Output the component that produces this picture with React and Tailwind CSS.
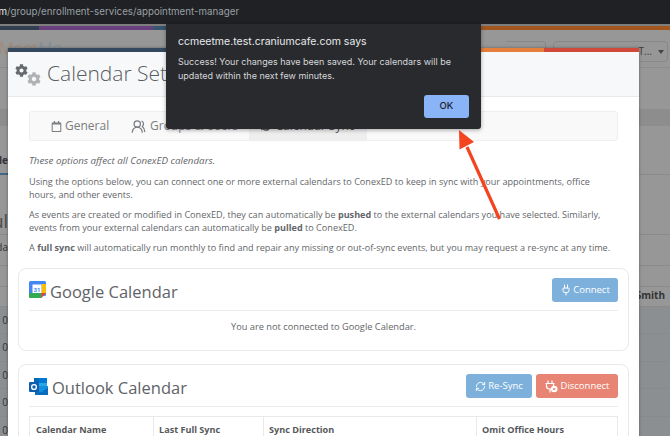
import { FaCog, FaRegCalendar, FaSyncAlt } from "react-icons/fa";
import { Plug, RefreshCw, UsersRound } from "lucide-react";

function GoogleLogo() {
  return (
    <svg width="17" height="17" viewBox="0 0 17 17" className="shrink-0 -mt-[5px]">
      <rect x="0" y="0" width="17" height="15" rx="1.5" fill="#4285f4" />
      <rect x="0" y="12" width="13" height="5" rx="1" fill="#34a853" />
      <rect x="12.5" y="3" width="4.5" height="9" fill="#fbbc04" />
      <path d="M12.5 12H17l-4.5 5z" fill="#ea4335" />
      <rect x="3.5" y="3.5" width="9" height="8.5" fill="#ffffff" />
      <text x="8" y="10.5" fontSize="6" fontFamily="Roboto, sans-serif" fontWeight="700" textAnchor="middle" fill="#4285f4">31</text>
    </svg>
  );
}

function OutlookLogo() {
  return (
    <svg width="19" height="17" viewBox="0 0 19 17" className="shrink-0 -mt-[3px]">
      <rect x="5" y="0" width="13" height="9" fill="#28a8ea" />
      <rect x="5" y="0" width="5" height="5" fill="#0364b8" />
      <rect x="10" y="0" width="8" height="5" fill="#0078d4" />
      <path d="M6 8h13v9H6z" fill="#1490df" />
      <path d="M6 11l6 3.5 7-5V17H6z" fill="#0a6cbd" />
      <rect x="0" y="4" width="10" height="10" rx="1" fill="#0f5fb0" />
      <circle cx="5" cy="9" r="2.4" fill="none" stroke="#ffffff" strokeWidth="1.4" />
    </svg>
  );
}

function PlugOff() {
  return (
    <svg width="14" height="13" viewBox="0 0 14 13" fill="none" stroke="#ffffff" strokeWidth="1.2">
      <path d="M4 0.5v3M8 0.5v3M1.5 3.5h9M2.5 3.5v2.5a3 3 0 0 0 3 3h1a3 3 0 0 0 3-3V3.5M6 9v3.5" />
      <circle cx="10.2" cy="9" r="3.3" fill="#ffffff" stroke="none" />
      <path d="M9 7.8l2.4 2.4M11.4 7.8L9 10.2" stroke="#e88473" strokeWidth="1" />
    </svg>
  );
}

function Panel({ className, children }) {
  return <div className={"mx-[10px] border border-[#e9e9e9] rounded-lg px-[10px] pt-[9px] " + className}>{children}</div>;
}

function StripRow({ className, left, right }) {
  return (
    <div className={"flex justify-between border-b border-[#8a8a8a] pr-[5px] text-[#333333] whitespace-nowrap " + className}>
      <span className="w-[8px] flex justify-end overflow-hidden">{left}</span>
      <span>{right}</span>
    </div>
  );
}

export default function App() {
  return (
    <div className="w-[670px] h-[436px] overflow-hidden relative flex flex-col bg-[#979797] font-['Open_Sans',sans-serif]">
      <div className="h-[24px] shrink-0 bg-[#202124] flex items-center text-[9.75px] text-[#9aa0a6] font-['Inter',sans-serif]">
        <span className="text-[#e8eaed] w-[7px] overflow-hidden flex justify-end">m</span>
        <span>/group/enrollment-services/appointment-manager</span>
      </div>

      {/* page behind the modal */}
      <div className="flex-1 flex flex-col">
        <div className="h-[2px] bg-[#7e7e7e]" />
        <div className="h-[4px] flex">
          <div className="w-[39px] bg-[#2f3f4d]" />
          <div className="w-[114px] bg-[#6a3f7d]" />
          <div className="w-[40px] bg-[#36566f]" />
          <div className="flex-1 bg-[#a2571f]" />
        </div>
        <div className="h-[38px] border-b border-[#8c8c8c] flex justify-between pt-[8px] pr-[2px]">
          <span className="text-[17px] leading-[20px] font-light -ml-[1px] text-[#a68672]">
            Meet<span className="text-[#7d8f9b]">Me</span>
          </span>
          <div className="flex gap-[7px] mt-[3px] h-[21px]">
            <div className="w-[40px] rounded-r border border-l-0 border-[#888888]" />
            <div className="w-[115px] rounded border border-[#888888] flex items-center justify-end pr-[3px] text-[10px] text-[#3d3d3d]">
              <span>T...</span>
              <span className="ml-[6px] w-0 h-0 border-l-[3px] border-r-[3px] border-t-[4px] border-l-transparent border-r-transparent border-t-[#444444]" />
            </div>
          </div>
        </div>
        <div className="h-[41px]" />
        <div className="h-[17px] bg-[#8d8d8d]" />
        <div className="h-[49px] border-b border-[#8a8a8a] text-[10px] font-bold text-[#333333] flex items-end pb-[6px] relative">
          <span className="w-[8px] flex justify-end overflow-hidden">le</span>
          <span className="absolute left-0 bottom-[-1px] w-[8px] h-[2px] bg-[#3f6685]" />
        </div>
        <div className="h-[60px] border-b border-[#8a8a8a] flex items-end pb-[4px] text-[18px] leading-none text-[#4a4a4a]">
          <span className="w-[8px] flex justify-end overflow-hidden">ul</span>
        </div>
        <StripRow className="h-[31px] text-[10px] pt-[5px]" left="da" />
        <StripRow className="h-[21px]" />
        <StripRow className="h-[20px] text-[10px] font-bold items-center pb-[2px]" right="Smith" />
        <div className="flex-1 flex flex-col bg-[#8b8f92]">
          <StripRow className="h-[27px] text-[10px] items-center" left="0" />
          <StripRow className="h-[28px] text-[10px] items-center" left="0" />
          <StripRow className="h-[27px] text-[10px] items-center" left="0" />
          <StripRow className="h-[28px] text-[10px] items-center" left="0" />
          <StripRow className="h-[28px] text-[10px] items-center" left="0" />
        </div>
      </div>

      {/* modal window */}
      <div className="absolute left-[8px] top-[48px] w-[631px] h-[400px] bg-white flex flex-col text-[#63666a] shadow-[0_0_3px_rgba(0,0,0,0.35)]">
        <div className="h-[4px] flex shrink-0">
          <div className="w-[158px] bg-[#34495e]" />
          <div className="flex-1 bg-[#e67e3c]" />
          <div className="w-[95px] bg-[#d0483a]" />
        </div>
        <div className="h-[45px] shrink-0 bg-[#f7f8fa] border-b border-[#e9e9e9] flex items-center pl-[7px]">
          <div className="relative w-[26px] h-[26px] mr-[6px]">
            <FaCog className="absolute left-0 top-[3px] text-[#666a6e]" size={13} />
            <FaCog className="absolute left-[12px] top-[11px] text-[#b0b3b5]" size={14} />
          </div>
          <span className="text-[21px] leading-none font-light text-[#5a5d60] whitespace-nowrap -mt-[2px]">Calendar Settings</span>
        </div>

        <div className="mt-[14px] mx-[21px] h-[30px] shrink-0 border border-[#eeeeee] bg-[#f9f9f9] rounded-[3px] flex items-stretch text-[12px] text-[#7a7d80]">
          <div className="w-[80px] ml-[21px] flex items-center gap-[3px]">
            <FaRegCalendar size={11} />
            <span>General</span>
          </div>
          <div className="w-[118px] flex items-center gap-[4px]">
            <UsersRound size={15} />
            <span>Groups & Users</span>
          </div>
          <div className="w-[118px] bg-[#eeeeee] flex items-center justify-center gap-[4px] text-[#55585b]">
            <FaSyncAlt size={10} />
            <span>Calendar Sync</span>
          </div>
        </div>

        <div className="mt-[13px] mx-[21px] text-[9.1px] leading-[13px] shrink-0 w-[585px]">
          <p className="italic text-[9.75px]">These options affect all ConexED calendars.</p>
          <p className="mt-[8px]">
            Using the options below, you can connect one or more external calendars to ConexED to keep in sync with your appointments, office hours, and other events.
          </p>
          <p className="mt-[7px]">
            As events are created or modified in ConexED, they can automatically be <b>pushed</b> to the external calendars you have selected. Similarly, events from your external calendars can automatically be <b>pulled</b> to ConexED.
          </p>
          <p className="mt-[7px]">
            A <b>full sync</b> will automatically run monthly to find and repair any missing or out-of-sync events, but you may request a re-sync at any time.
          </p>
        </div>

        <Panel className="mt-[14px] h-[83px] shrink-0">
          <div className="h-[33px] border-b border-[#ececec] flex items-start justify-between">
            <div className="flex items-center gap-[4px] mt-[4px]">
              <GoogleLogo />
              <span className="text-[16.5px] leading-[20px] text-[#5f6367]">Google Calendar</span>
            </div>
            <button className="w-[66px] h-[24px] rounded-[3px] bg-[#7db1dc] text-white text-[9.5px] flex items-center justify-center gap-[1px]">
              <Plug size={12} />
              Connect
            </button>
          </div>
          <div className="text-center text-[9.25px] mt-[9px]">You are not connected to Google Calendar.</div>
        </Panel>

        <Panel className="mt-[13px] flex-1">
          <div className="h-[33px] border-b border-[#ececec] flex items-start justify-between">
            <div className="flex items-center gap-[4px] mt-[4px]">
              <OutlookLogo />
              <span className="text-[16.5px] leading-[20px] text-[#5f6367]">Outlook Calendar</span>
            </div>
            <div className="flex gap-[4px]">
              <button className="w-[66px] h-[24px] rounded-[3px] bg-[#7db1dc] text-white text-[9.5px] flex items-center justify-center gap-[2px]">
                <RefreshCw size={11} />
                Re-Sync
              </button>
              <button className="w-[82px] h-[24px] rounded-[3px] bg-[#e88473] text-white text-[9.5px] flex items-center justify-center gap-[2px]">
                <PlugOff />
                Disconnect
              </button>
            </div>
          </div>
          <div className="mt-[9px] border border-[#e9e9e9] grid grid-cols-[123px_110px_213px_1fr] text-[9.1px] font-bold text-[#55585b]">
            <div className="h-[26px] px-[6px] flex items-center">Calendar Name</div>
            <div className="h-[26px] px-[5px] flex items-center border-l border-[#e9e9e9]">Last Full Sync</div>
            <div className="h-[26px] px-[5px] flex items-center border-l border-[#e9e9e9]">Sync Direction</div>
            <div className="h-[26px] px-[5px] flex items-center border-l border-[#e9e9e9]">Omit Office Hours</div>
          </div>
        </Panel>
      </div>

      {/* browser alert */}
      <div className="absolute left-[166px] top-[24px] w-[315px] h-[105px] bg-[#292a2d] rounded-b-[3px] font-['Inter',sans-serif] shadow-[0_1px_4px_rgba(0,0,0,0.35)] px-[12px] pt-[11px] flex flex-col">
        <div className="text-[10.5px] leading-[13px] text-[#e8eaed]">ccmeetme.test.craniumcafe.com says</div>
        <div className="mt-[7px] text-[9px] leading-[14px] text-[#d5d7da]">
          Success! Your changes have been saved. Your calendars will be updated within the next few minutes.
        </div>
        <div className="flex justify-end mt-auto mb-[11px]">
          <button className="w-[45px] h-[23px] rounded-[3px] bg-[#8ab4f8] text-[#202124] text-[9.5px] font-medium flex items-center justify-center">OK</button>
        </div>
      </div>

      {/* annotation arrow */}
      <svg className="absolute left-[450px] top-[125px]" width="60" height="100" viewBox="0 0 60 100">
        <path d="M49.5 94L17 22" stroke="#f4431f" strokeWidth="3.2" fill="none" />
        <path d="M9 5L9.5 24.5L24 17z" fill="#f4431f" />
      </svg>
    </div>
  );
}
